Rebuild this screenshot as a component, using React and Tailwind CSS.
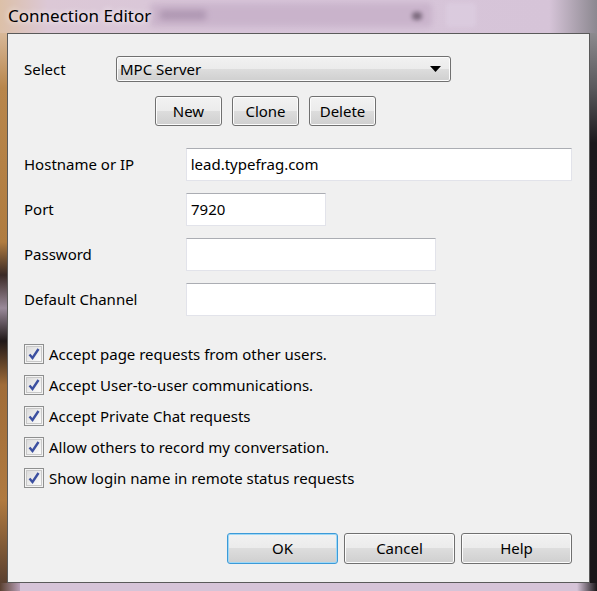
import { useState } from 'react'

const font = { fontFamily: '"Noto Sans", "Open Sans", Arial, sans-serif' }

const Button = ({ children, className = '', focused = false }) => (
  <button
    className={
      'relative flex items-center justify-center rounded-[3px] border text-[15px] text-black bg-[linear-gradient(#f2f2f2_0%,#ebebeb_50%,#dddddd_50%,#cfcfcf_100%)] ' +
      (focused
        ? 'border-[#3c9ad8] shadow-[inset_0_0_0_1px_#9fd8f6] '
        : 'border-[#707070] shadow-[inset_0_0_0_1px_#fcfcfc] ') +
      className
    }
  >
    {children}
  </button>
)

const TextBox = ({ value = '', className = '' }) => (
  <div
    className={
      'flex h-[33px] items-center border border-[#e2e3ea] border-t-[#abadb3] bg-white px-[4px] text-[15px] text-black ' +
      className
    }
  >
    {value}
  </div>
)

const CheckRow = ({ label }) => {
  const [checked, setChecked] = useState(true)
  return (
    <div className="flex h-[20px] items-center gap-[5px]" onClick={() => setChecked(!checked)}>
      <div className="flex h-[20px] w-[20px] items-center justify-center border border-[#8e8f8f] bg-[#f4f4f4]">
        <div className="flex h-[16px] w-[16px] items-center justify-center border border-[#c8c8c8] bg-[linear-gradient(135deg,#dcdcdc,#fbfbfb)]">
          {checked && (
            <svg width="14" height="14" viewBox="0 0 14 14">
              <path d="M2.5 7.5 L5.5 11 L11.5 2" fill="none" stroke="#3b4fa0" strokeWidth="2.4" strokeLinejoin="miter" />
            </svg>
          )}
        </div>
      </div>
      <span className="text-[15px] text-black">{label}</span>
    </div>
  )
}

const Field = ({ label, value, width }) => (
  <div className="flex items-center">
    <span className="w-[162px] text-[15px] text-black">{label}</span>
    <TextBox value={value} className={width} />
  </div>
)

export default function App() {
  return (
    <div className="flex h-[591px] w-[597px] flex-col overflow-hidden bg-[#d6c4d8]" style={font}>
      {/* title bar with blurred glass behind */}
      <div className="relative h-[33px] shrink-0 bg-[linear-gradient(90deg,#dcc0a8_0%,#dcc8d6_8%,#d8c6da_40%,#d6c4d8_92%,#8c8890_100%)]">
        <div className="absolute left-[150px] top-[3px] h-[24px] w-[282px] rounded-[4px] bg-[#c0a8c2] opacity-60 blur-[3px]"></div>
        <div className="absolute left-[160px] top-[10px] h-[10px] w-[46px] rounded-[3px] bg-[#8a7090] opacity-40 blur-[3px]"></div>
        <div className="absolute left-[412px] top-[12px] h-[8px] w-[10px] rounded-full bg-[#5a4a5c] opacity-70 blur-[2px]"></div>
        <div className="absolute left-[446px] top-[3px] h-[24px] w-[30px] rounded-[3px] bg-[#dccde0] opacity-80 blur-[2px]"></div>
        <span className="absolute left-[8px] top-[3px] text-[17px] text-black [text-shadow:0_0_6px_#ffffff]">
          Connection Editor
        </span>
      </div>

      <div className="flex h-[550px] shrink-0">
        <div className="w-[7px] bg-[linear-gradient(#d8b898_0%,#b8864c_10%,#b07c40_38%,#3a2a26_44%,#9a8a9a_50%,#201818_56%,#a06c38_64%,#b07a40_85%,#5a4030_100%)]"></div>

        {/* dialog panel */}
        <div className="flex w-[583px] flex-col border border-[#5a5a5a] bg-[#f0f0f0] pl-[16px] pt-[22px] pb-[18px] pr-[17px]">
          <div className="flex h-[26px] items-center">
            <span className="w-[92px] text-[15px] text-black">Select</span>
            <div className="flex h-[26px] w-[335px] items-center justify-between rounded-[3px] border border-[#707070] bg-[linear-gradient(#f2f2f2_0%,#ebebeb_50%,#dddddd_50%,#cfcfcf_100%)] pl-[3px] pr-[9px] text-[15px] text-black shadow-[inset_0_0_0_1px_#fcfcfc]">
              MPC Server
              <svg width="11" height="6" viewBox="0 0 11 6">
                <path d="M0 0 H11 L5.5 6 Z" fill="#000" />
              </svg>
            </div>
          </div>

          <div className="mt-[14px] flex gap-[10px] pl-[131px]">
            <Button className="h-[30px] w-[67px]">New</Button>
            <Button className="h-[30px] w-[67px]">Clone</Button>
            <Button className="h-[30px] w-[67px]">Delete</Button>
          </div>

          <div className="mt-[22px] flex flex-col gap-[12px]">
            <Field label="Hostname or IP" value="lead.typefrag.com" width="w-[387px]" />
            <Field label="Port" value="7920" width="w-[140px]" />
            <Field label="Password" value="" width="w-[250px]" />
            <Field label="Default Channel" value="" width="w-[250px]" />
          </div>

          <div className="mt-[28px] flex flex-col gap-[11px]">
            <CheckRow label="Accept page requests from other users." />
            <CheckRow label="Accept User-to-user communications." />
            <CheckRow label="Accept Private Chat requests" />
            <CheckRow label="Allow others to record my conversation." />
            <CheckRow label="Show login name in remote status requests" />
          </div>

          <div className="mt-auto flex justify-end gap-[6px]">
            <Button focused className="h-[31px] w-[111px]">OK</Button>
            <Button className="h-[31px] w-[111px]">Cancel</Button>
            <Button className="h-[31px] w-[111px]">Help</Button>
          </div>
        </div>

        <div className="w-[7px] bg-[linear-gradient(#8c8a8e_0%,#5a585c_10%,#1c181c_20%,#1a1619_100%)]"></div>
      </div>

      <div className="flex h-[8px] shrink-0">
        <div className="w-[20px] bg-[linear-gradient(90deg,#5a4030,#b8a0b8)]"></div>
        <div className="flex-1 bg-[#d6c4d8]"></div>
        <div className="w-[20px] bg-[linear-gradient(90deg,#d6c4d8,#1a1619)]"></div>
      </div>
    </div>
  )
}
